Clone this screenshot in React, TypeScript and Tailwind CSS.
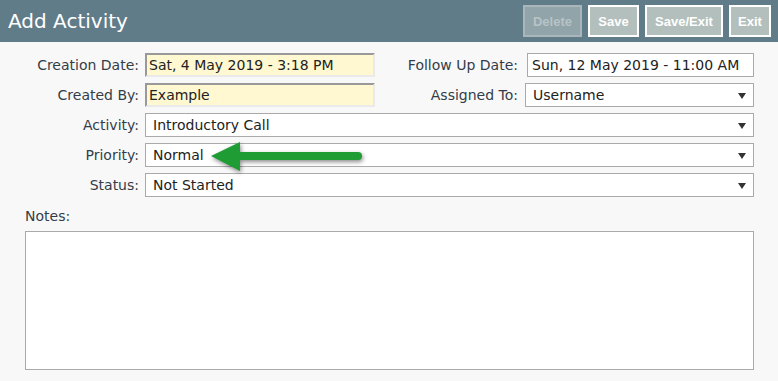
import React from "react";

const Caret = () => (
  <svg width="8" height="6" viewBox="0 0 8 6" className="absolute right-[7px] top-[9px]">
    <path d="M0 0 H8 L4 6 Z" fill="#333" />
  </svg>
);

const Select = ({ value, w }: { value: string; w: string }) => (
  <div className={`relative h-[24px] ${w} bg-white border border-[#aaaaaa] flex items-center pl-[7px] pt-[1px] text-[#222]`}>
    <span>{value}</span>
    <Caret />
  </div>
);

const YellowInput = ({ value }: { value: string }) => (
  <div className="h-[24px] w-[230px] bg-[#fff8d0] border-2 border-t-[#999999] border-l-[#999999] border-r-[#eaeaea] border-b-[#eaeaea] flex items-center pl-[2px] pt-[1px] text-[#222]">
    {value}
  </div>
);

export default function App() {
  return (
    <div
      className="relative w-[778px] h-[381px] bg-[#f8f8f8] overflow-hidden text-[14px] leading-[17px]"
      style={{ fontFamily: '"DejaVu Sans", Verdana, sans-serif' }}
    >
      <div className="h-[42px] bg-[#607c89] flex items-center justify-between pl-[8px] pr-[7px]">
        <div className="text-white text-[20px] leading-[24px]">Add Activity</div>
        <div
          className="flex gap-[6px] text-[13px] font-bold"
          style={{ fontFamily: '"Liberation Sans", Arial, sans-serif' }}
        >
          <div className="h-[32px] w-[59px] border-2 border-[#a9b6ba] bg-[#91a4a9] text-[#b7c3c6] flex items-center justify-center">Delete</div>
          <div className="h-[32px] w-[51px] border-2 border-white bg-[#b3bfbd] text-white flex items-center justify-center">Save</div>
          <div className="h-[32px] w-[78px] border-2 border-white bg-[#b3bfbd] text-white flex items-center justify-center">Save/Exit</div>
          <div className="h-[32px] w-[42px] border-2 border-white bg-[#b3bfbd] text-white flex items-center justify-center">Exit</div>
        </div>
      </div>

      <div className="pt-[11px] flex flex-col gap-[6px] text-[#333d48]">
        <div className="flex items-center h-[24px]">
          <div className="w-[139px] text-right pt-[1px]">Creation Date:</div>
          <div className="ml-[6px]"><YellowInput value="Sat, 4 May 2019 - 3:18 PM" /></div>
          <div className="w-[143px] text-right pt-[1px]">Follow Up Date:</div>
          <div className="ml-[9px] h-[24px] w-[227px] bg-white border border-[#aaaaaa] flex items-center pl-[4px] pt-[1px] text-[#222]">
            Sun, 12 May 2019 - 11:00 AM
          </div>
        </div>
        <div className="flex items-center h-[24px]">
          <div className="w-[139px] text-right pt-[1px]">Created By:</div>
          <div className="ml-[6px]"><YellowInput value="Example" /></div>
          <div className="w-[143px] text-right pt-[1px]">Assigned To:</div>
          <div className="ml-[7px]"><Select value="Username" w="w-[229px]" /></div>
        </div>
        <div className="flex items-center h-[24px]">
          <div className="w-[139px] text-right pt-[1px]">Activity:</div>
          <div className="ml-[6px]"><Select value="Introductory Call" w="w-[609px]" /></div>
        </div>
        <div className="flex items-center h-[24px]">
          <div className="w-[139px] text-right pt-[1px]">Priority:</div>
          <div className="ml-[6px]"><Select value="Normal" w="w-[609px]" /></div>
        </div>
        <div className="flex items-center h-[24px]">
          <div className="w-[139px] text-right pt-[1px]">Status:</div>
          <div className="ml-[6px]"><Select value="Not Started" w="w-[609px]" /></div>
        </div>
        <div className="pl-[25px] mt-[1px]">
          <div className="h-[17px] mt-[4px]">Notes:</div>
          <div className="mt-[6px] h-[139px] w-[729px] bg-white border border-[#aaaaaa]" />
        </div>
      </div>

      <svg
        className="absolute left-[205px] top-[138px] drop-shadow-[1px_2px_2px_rgba(0,0,0,0.45)]"
        width="165"
        height="40"
        viewBox="0 0 165 40"
      >
        <path d="M6 18 L35 4 L35 33 Z" fill="#1f9c34" />
        <line x1="34" y1="18" x2="153" y2="18" stroke="#1f9c34" strokeWidth="8" strokeLinecap="round" />
      </svg>
    </div>
  );
}
